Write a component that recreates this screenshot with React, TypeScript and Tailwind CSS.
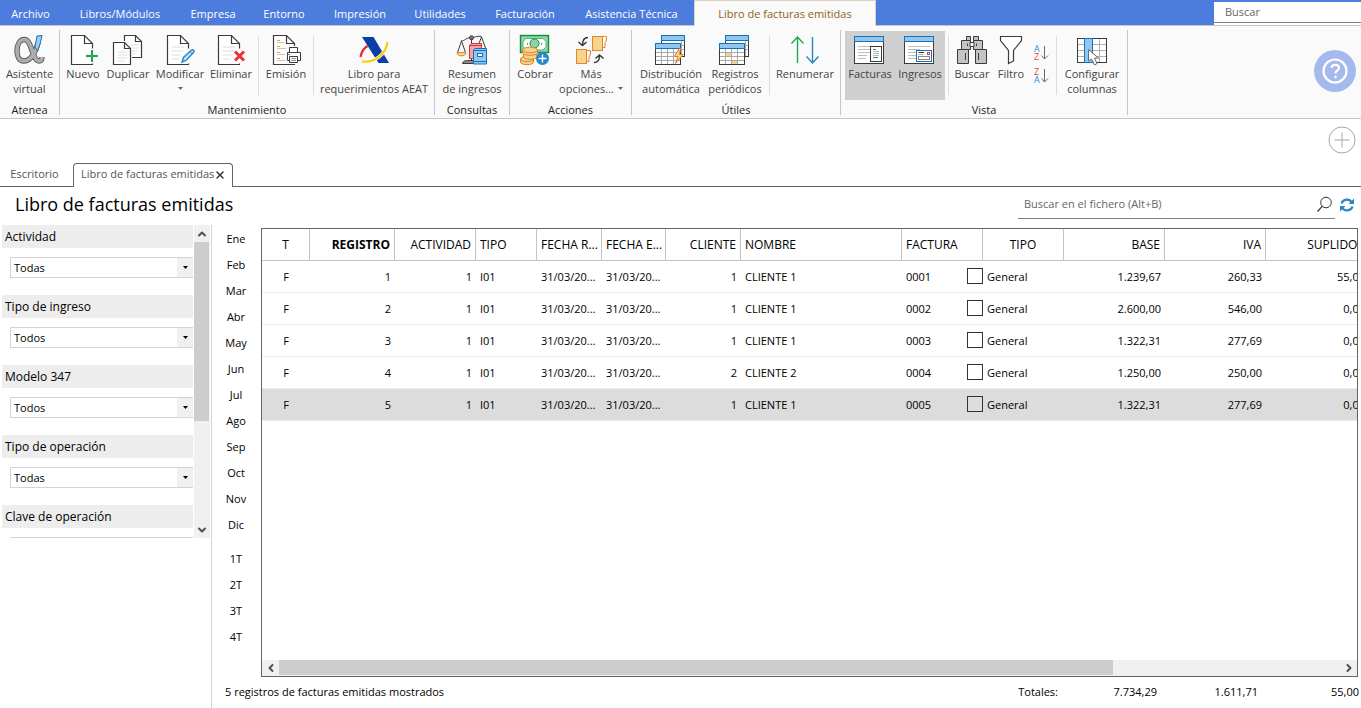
import React from 'react';
import clsx from 'clsx';
import { ChevronDown, ChevronLeft, ChevronRight, ChevronUp, X } from 'lucide-react';

const INK = '#3b3b3b';

const Icon = ({ children }: { children: React.ReactNode }) => (
  <svg width="32" height="32" viewBox="0 0 32 32" fill="none" className="block shrink-0" aria-hidden="true">
    {children}
  </svg>
);

const AlphaIcon = () => {
  const d = 'M24 9 C21 20 16 27 9.500 27 C5 27 3 22 3 17 C3 10 6 5.500 10.500 5.500 C18 5.500 18 27 25 27 C27 27 28 25.500 28 23';
  return (
    <Icon>
      <path d={d} stroke="#5c5c5c" strokeWidth="5.400" />
      <path d={d} stroke="#adadad" strokeWidth="3.600" />
      <path d="M23 2 L28 1.500 L26 10 L23.500 17 L21 13 Z" fill="#9fcdf2" stroke="#1d6fb0" />
    </Icon>
  );
};

const Page = ({ x = 3.5, lines = false }: { x?: number; lines?: boolean }) => (
  <g transform={`translate(${x} 1.5)`}>
    <path d="M0 0 H13 L21 8 V29 H0 Z" fill="#fff" />
    <path d="M21 13 V8 L13 0 H0 V29 H21 V28" stroke={INK} strokeWidth="1.200" />
    <path d="M13 0 V8 H21" stroke={INK} strokeWidth="1.200" />
    {lines && <path d="M4 11.500 H17 M4 15.500 H16 M4 19.500 H13 M4 23.500 H12" stroke="#dcdcdc" />}
  </g>
);

const NewIcon = () => (
  <Icon>
    <Page x={4.5} />
    <path d="M25 16 V28 M19 22 H31" stroke="#fafafa" strokeWidth="4" />
    <path d="M25 16 V28 M19 22 H31" stroke="#1fa750" strokeWidth="2" />
  </Icon>
);

const SmallPage = () => (
  <>
    <path d="M0 0 H11 L17 6 V22 H0 Z" fill="#fff" stroke={INK} strokeWidth="1.200" />
    <path d="M11 0 V6 H17" stroke={INK} strokeWidth="1.200" />
    <path d="M4 9.500 H14 M4 12.500 H14 M4 15.500 H14 M4 18.500 H11" stroke="#dcdcdc" />
  </>
);

const DuplicateIcon = () => (
  <Icon>
    <g transform="translate(12.5 1.5)"><SmallPage /></g>
    <path d="M0 7 H15 L20 12 V32 H0 Z" fill="#fafafa" />
    <g transform="translate(1.5 8.5)"><SmallPage /></g>
  </Icon>
);

const EditIcon = () => (
  <Icon>
    <Page lines />
    <path d="M18 28 L19.500 23.500 L27.500 16 C29 15 31 17 29.500 18.500 L22 26.500 Z" fill="#c4e2f7" stroke="#2586c8" strokeWidth="1.400" />
    <path d="M26 17.500 L28.500 20" stroke="#2586c8" />
  </Icon>
);

const DeleteIcon = () => (
  <Icon>
    <Page lines />
    <path d="M20 17.500 L29 26.500 M29 17.500 L20 26.500" stroke="#fafafa" strokeWidth="5" />
    <path d="M20 17.500 L29 26.500 M29 17.500 L20 26.500" stroke="#ea3434" strokeWidth="3" />
  </Icon>
);

const PrintIcon = () => (
  <Icon>
    <Page />
    <path d="M7 6.500 H10 M7 12.500 H10 M7 18.500 H10 M7 24.500 H10" stroke="#f0a11d" />
    <path d="M7 8.500 H14 M7 14.500 H16 M7 20.500 H15 M7 26.500 H15" stroke="#c4c4c4" />
    <path d="M16 12 H29 V17 H32 V28 H28 V30 H16 Z" fill="#fafafa" />
    <path d="M19.500 18 V13.500 H27.500 V18 M19.500 26.500 H17.500 V18.500 H30.500 V26.500 H27.500 M19.500 22.500 H27.500 V28.500 H19.500 Z" fill="#fff" stroke={INK} />
    <path d="M21.500 24.500 H26 M21.500 26.500 H26" stroke="#8a8a8a" />
    <path d="M17.500 20.500 H20" stroke="#2586c8" />
  </Icon>
);

const AeatIcon = () => (
  <Icon>
    <path d="M9.500 12 C6 14 3.500 18 2.500 23" stroke="#e5262d" strokeWidth="2.200" />
    <path d="M4 3 H15.500 L31 29 H20.500 Z" fill="#0b3ea4" />
    <path d="M4 27.500 C17 29 28 20 29.500 8" stroke="#fafafa" strokeWidth="3.500" />
    <path d="M4 27.500 C17 29 28 20 29.500 8" stroke="#f9cf0a" strokeWidth="2.300" />
  </Icon>
);

const SummaryIcon = () => (
  <Icon>
    <path d="M15.500 5 V26 M5 7 C9 7 10 3.500 15.500 3.500 C20 3.500 21 1.500 25.500 2.500 M5.500 7 L1.500 18.500 M5.500 7 L9.500 18.500 M25.500 3 L22 12 M25.500 3 L29.500 14" stroke={INK} />
    <circle cx="15.500" cy="3.800" r="2" fill="#777" stroke={INK} />
    <path d="M1 18.500 H10 C10 23 1 23 1 18.500 Z" fill="#f8d38b" stroke="#df8428" />
    <path d="M6.500 29.500 C7 26.500 10 26.500 15 26.500 H18 V29.500 Z" fill="#8c8c8c" stroke={INK} />
    <path d="M13.500 11.500 L15 9.500 H25.500 V24.500 H13.500 Z" fill="#f6a5a5" stroke="#dc3030" />
    <path d="M13.500 11.500 H25.500" stroke="#dc3030" />
    <path d="M17.500 16.500 L19 14.500 H30.500 V30 H17.500 Z" fill="#92c8f0" stroke="#1571b8" />
    <path d="M17.500 16.500 H30.500 M17.500 27.500 H30.500" stroke="#1571b8" />
    <rect x="21.500" y="19.500" width="5" height="3" fill="#fff" stroke="#1571b8" />
  </Icon>
);

const CashIcon = () => (
  <Icon>
    <rect x="1.500" y="1.500" width="28" height="17" fill="#8ed4a4" stroke="#138f43" strokeWidth="1.400" />
    <path d="M7 4.500 H24 L27 7.500 V13 L24 16 H7 L4 13 V7.500 Z" fill="#fff" stroke="#57b878" />
    <circle cx="15.500" cy="9.500" r="4.500" fill="#8ed4a4" stroke="#138f43" />
    <path d="M8 10 H9 M22 10 H23" stroke="#138f43" strokeWidth="1.600" />
    <g fill="#f8d38b" stroke="#df8428">
      <path d="M1.500 25 V28 C1.500 31.500 14.500 31.500 14.500 28 V25 Z" />
      <ellipse cx="8" cy="25" rx="6.500" ry="2.600" />
      <path d="M4.500 20.500 V23 C4.500 26 18 26 18 23 V20.500 Z" />
      <path d="M3.500 16 V19 C3.500 22 18.500 22 18.500 19 V16 Z" />
      <ellipse cx="11" cy="16" rx="7.500" ry="2.800" />
    </g>
    <circle cx="23.500" cy="24.500" r="6.500" fill="#2586c8" />
    <path d="M23.500 20.500 V28.500 M19.500 24.500 H27.500" stroke="#fff" strokeWidth="1.400" />
  </Icon>
);

const MoreIcon = () => (
  <Icon>
    <g fill="#f8d38b" stroke="#e0882e">
      <path d="M26.500 2.500 H31.500 V6 L30 9 V13.500 H26.500 Z" fill="#fafafa" />
      <rect x="17.500" y="2.500" width="10" height="14" />
      <path d="M10.500 16.500 H15.500 V20 L14 23 V27.500 H10.500 Z" fill="#fafafa" />
      <rect x="1.500" y="15.500" width="10" height="14" />
    </g>
    <path d="M13 3.500 C9 3.500 7.500 6 7.500 11 M3.500 8 L7.500 11.500 L11.500 8" stroke={INK} strokeWidth="1.500" />
    <path d="M19 28.500 C23 28.500 24.500 26 24.500 22 M20.500 24.500 L24.500 21 L28.500 24.500" stroke={INK} strokeWidth="1.500" />
  </Icon>
);

const TablePair = ({ children }: { children: React.ReactNode }) => (
  <Icon>
    <rect x="6.500" y="1.500" width="23" height="21" fill="#fff" stroke={INK} />
    <path d="M25 11.500 H29 M25 15.500 H29 M26.500 7 V22" stroke="#a8a8a8" />
    <rect x="6.500" y="1.500" width="23" height="5" fill="#92c8f0" stroke="#1571b8" />
    <rect x="0.500" y="9.500" width="25" height="21" fill="#fff" stroke={INK} />
    <path d="M1 18.500 H25 M1 22.500 H25 M1 26.500 H25 M6.500 15 V30 M12.500 15 V30 M18.500 15 V30" stroke="#a8a8a8" />
    <rect x="0.500" y="9.500" width="25" height="5" fill="#92c8f0" stroke="#1571b8" />
    {children}
  </Icon>
);

const DistributionIcon = () => (
  <TablePair>
    <path d="M24 14.500 L19.500 22.500 H23 L20.500 29.500 L28 20.500 H24.500 L25.500 14.500 Z" fill="#f8d38b" stroke="#e8772e" />
  </TablePair>
);

const PeriodicIcon = () => (
  <TablePair>
    <path d="M7 19 H12 V22 H7 Z M13 27 H18 V30 H13 Z" fill="#f8d38b" />
  </TablePair>
);

const RenumberIcon = () => (
  <Icon>
    <path d="M8.500 29 V3 M2.500 9.500 L8.500 3 L14.500 9.500" stroke="#1fa750" strokeWidth="1.400" />
    <path d="M23.500 3 V29 M17.500 22.500 L23.500 29 L29.500 22.500" stroke="#2586c8" strokeWidth="1.400" />
  </Icon>
);

const WindowFrame = ({ children }: { children: React.ReactNode }) => (
  <Icon>
    <rect x="0.500" y="2.500" width="29" height="27" fill="#fff" stroke={INK} />
    <rect x="0.500" y="2.500" width="29" height="5" fill="#92c8f0" stroke="#1571b8" />
    <path d="M4 12.500 H26 M4 15.500 H16 M4 18.500 H16 M4 21.500 H13 M4 24.500 H12" stroke="#bdbdbd" />
    {children}
  </Icon>
);

const InvoicesIcon = () => (
  <WindowFrame>
    <rect x="16.500" y="12.500" width="11" height="15" fill="#fff" stroke={INK} />
    <path d="M19 15.500 H22 M19 23.500 H24" stroke="#1fa750" />
    <path d="M19 17.500 H25 M19 19.500 H25 M19 21.500 H25" stroke="#bdbdbd" />
  </WindowFrame>
);

const IncomeIcon = () => (
  <WindowFrame>
    <rect x="12.500" y="16.500" width="15" height="11" fill="#fff" stroke="#1571b8" />
    <path d="M14.500 18.500 H20" stroke={INK} />
    <path d="M14.500 20.500 H19" stroke="#a8a8a8" />
    <rect x="14.500" y="22.500" width="11" height="3" stroke="#8a8a8a" />
    <rect x="23.500" y="18.500" width="2" height="2" stroke="#ea3434" />
  </WindowFrame>
);

const BinocularsIcon = () => (
  <Icon>
    <g fill="#c4c4c4" stroke={INK}>
      <path d="M10.500 2.500 H14.500 V6.500 H10.500 Z M17.500 2.500 H22.500 V6.500 H17.500 Z" />
      <path d="M5.500 6.500 H14.500 V15.500 H5.500 Z M17.500 6.500 H26.500 V15.500 H17.500 Z" />
      <path d="M1.500 15.500 H12.500 V29.500 H1.500 Z M19.500 15.500 H30.500 V29.500 H19.500 Z" />
      <path d="M14 8.500 H18 V12.500 H14 Z" fill="#fff" />
    </g>
    <path d="M9.500 19 V26 M22.500 19 V26 M11.500 9.500 V12 M20.500 9.500 V12" stroke={INK} />
  </Icon>
);

const FunnelIcon = () => (
  <Icon>
    <path d="M5.500 2.500 H26.500 V6.500 L18.500 16.500 V27 L13.500 29.500 V16.500 L5.500 6.500 Z" fill="#fff" stroke={INK} strokeWidth="1.200" />
  </Icon>
);

const SortIcon = ({ from, to, fromColor, toColor }: { from: string; to: string; fromColor: string; toColor: string }) => (
  <svg width="16" height="16" viewBox="0 0 16 16" className="block overflow-visible" aria-hidden="true">
    <text x="0" y="7" fontSize="9" fontFamily="Open Sans" fill={fromColor}>{from}</text>
    <text x="0" y="15" fontSize="9" fontFamily="Open Sans" fill={toColor}>{to}</text>
    <path d="M10.500 1 V14 M7.500 10.500 L10.500 14 L14 10.500" fill="none" stroke="#6a6a6a" />
  </svg>
);

const ColumnsIcon = () => (
  <Icon>
    <rect x="1.500" y="4.500" width="29" height="24" fill="#fff" />
    <path d="M2 10.500 H30 M2 16.500 H30 M2 22.500 H30 M23.500 5 V28" stroke="#b0b0b0" />
    <rect x="1.500" y="4.500" width="29" height="24" stroke={INK} />
    <rect x="8.500" y="4.500" width="8" height="24" fill="#92c8f0" stroke="#1571b8" />
    <path d="M12.500 15.500 V27 L15.500 25 L18.500 31 L21 29.500 L18.500 24 H22.500 Z" fill="#fff" stroke="#6a6a6a" />
  </Icon>
);

const menuItems = [
  { label: 'Archivo', width: 'w-[61px]' },
  { label: 'Libros/Módulos', width: 'w-[118px]' },
  { label: 'Empresa', width: 'w-[68px]' },
  { label: 'Entorno', width: 'w-[74px]' },
  { label: 'Impresión', width: 'w-[78px]' },
  { label: 'Utilidades', width: 'w-[82px]' },
  { label: 'Facturación', width: 'w-[88px]' },
  { label: 'Asistencia Técnica', width: 'w-[125px]' },
];

const months = ['Ene', 'Feb', 'Mar', 'Abr', 'May', 'Jun', 'Jul', 'Ago', 'Sep', 'Oct', 'Nov', 'Dic'];
const quarters = ['1T', '2T', '3T', '4T'];

const filters = [
  { id: 'actividad', label: 'Actividad', value: 'Todas' },
  { id: 'tipo-ingreso', label: 'Tipo de ingreso', value: 'Todos' },
  { id: 'modelo-347', label: 'Modelo 347', value: 'Todos' },
  { id: 'tipo-operacion', label: 'Tipo de operación', value: 'Todas' },
  { id: 'clave-operacion', label: 'Clave de operación', value: '' },
];

const invoices = [
  { registro: 1, cliente: 1, nombre: 'CLIENTE 1', factura: '0001', base: '1.239,67', iva: '260,33', suplidos: '55,00' },
  { registro: 2, cliente: 1, nombre: 'CLIENTE 1', factura: '0002', base: '2.600,00', iva: '546,00', suplidos: '0,00' },
  { registro: 3, cliente: 1, nombre: 'CLIENTE 1', factura: '0003', base: '1.322,31', iva: '277,69', suplidos: '0,00' },
  { registro: 4, cliente: 2, nombre: 'CLIENTE 2', factura: '0004', base: '1.250,00', iva: '250,00', suplidos: '0,00' },
  { registro: 5, cliente: 1, nombre: 'CLIENTE 1', factura: '0005', base: '1.322,31', iva: '277,69', suplidos: '0,00' },
];

interface ToolProps {
  icon: React.ReactNode;
  lines: string[];
  width: string;
  caret?: 'below' | 'inline';
  active?: boolean;
}

const Caret = () => (
  <svg width="5" height="3" viewBox="0 0 5 3" aria-hidden="true">
    <path d="M0 0 H5 L2.500 3 Z" fill="#6a6a6a" />
  </svg>
);

const Tool = ({ icon, lines, width, caret, active }: ToolProps) => (
  <button
    type="button"
    className={clsx('flex h-[69px] shrink-0 flex-col items-center pt-[3px] leading-[15px] whitespace-nowrap text-[#444]', width, active && 'bg-[#cfcfcf]')}
  >
    {icon}
    {lines.map((line, i) => (
      <span key={line} className="flex items-center gap-1">
        {line}
        {caret === 'inline' && i === lines.length - 1 && <Caret />}
      </span>
    ))}
    {caret === 'below' && <span className="flex h-[15px] items-center"><Caret /></span>}
  </button>
);

const Group = ({ title, children }: { title: string; children: React.ReactNode }) => (
  <section className="flex h-[85px] shrink-0 flex-col border-r border-[#c6c6c6] pt-px">
    <div className="flex">{children}</div>
    <h2 className="mt-[3px] text-center leading-[14px] text-[#222]">{title}</h2>
  </section>
);

const Divider = () => <div className="mt-[5px] h-[59px] w-px shrink-0 bg-[#dcdcdc]" />;

const Ribbon = () => (
  <div className="flex h-[93px] shrink-0 overflow-hidden border-b border-[#c6c6c6] bg-[#fafafa] pt-1">
    <Group title="Atenea">
      <Tool icon={<AlphaIcon />} lines={['Asistente', 'virtual']} width="w-[59px]" />
    </Group>
    <Group title="Mantenimiento">
      <Tool icon={<NewIcon />} lines={['Nuevo']} width="w-[46px]" />
      <Tool icon={<DuplicateIcon />} lines={['Duplicar']} width="w-[44px]" />
      <Tool icon={<EditIcon />} lines={['Modificar']} width="w-[60px]" caret="below" />
      <Tool icon={<DeleteIcon />} lines={['Eliminar']} width="w-[42px]" />
      <div className="w-1.5" />
      <Divider />
      <Tool icon={<PrintIcon />} lines={['Emisión']} width="w-[54px]" />
      <Divider />
      <Tool icon={<AeatIcon />} lines={['Libro para', 'requerimientos AEAT']} width="w-[120px]" />
    </Group>
    <Group title="Consultas">
      <Tool icon={<SummaryIcon />} lines={['Resumen', 'de ingresos']} width="w-[74px]" />
    </Group>
    <Group title="Acciones">
      <Tool icon={<CashIcon />} lines={['Cobrar']} width="w-[50px]" />
      <Tool icon={<MoreIcon />} lines={['Más', 'opciones...']} width="w-[62px]" caret="inline" />
      <div className="w-[9px]" />
    </Group>
    <Group title="Útiles">
      <Tool icon={<DistributionIcon />} lines={['Distribución', 'automática']} width="w-[78px]" />
      <Tool icon={<PeriodicIcon />} lines={['Registros', 'periódicos']} width="w-[50px]" />
      <div className="w-[9px]" />
      <Divider />
      <Tool icon={<RenumberIcon />} lines={['Renumerar']} width="w-[70px]" />
    </Group>
    <Group title="Vista">
      <div className="w-1" />
      <Tool icon={<InvoicesIcon />} lines={['Facturas']} width="w-[50px]" active />
      <Tool icon={<IncomeIcon />} lines={['Ingresos']} width="w-[50px]" active />
      <div className="w-[3px]" />
      <Divider />
      <Tool icon={<BinocularsIcon />} lines={['Buscar']} width="w-[46px]" />
      <Tool icon={<FunnelIcon />} lines={['Filtro']} width="w-[32px]" />
      <div className="flex w-[29px] flex-col items-center gap-[7px] pt-[14px]">
        <button type="button" aria-label="Orden ascendente">
          <SortIcon from="A" to="Z" fromColor="#2f8fd6" toColor="#e8434a" />
        </button>
        <button type="button" aria-label="Orden descendente">
          <SortIcon from="Z" to="A" fromColor="#e8434a" toColor="#2f8fd6" />
        </button>
      </div>
      <Divider />
      <Tool icon={<ColumnsIcon />} lines={['Configurar', 'columnas']} width="w-[70px]" />
    </Group>
    <button type="button" aria-label="Ayuda" className="mt-5 mr-[5px] ml-auto h-[42px] w-[42px] shrink-0 rounded-full bg-[#a5baec]">
      <svg width="42" height="42" viewBox="0 0 42 42" fill="none" stroke="#fff" aria-hidden="true">
        <circle cx="21" cy="21" r="11.500" strokeWidth="2.200" />
        <path d="M17.500 18 C17.500 13.500 25 14 25 18 C25 20.500 21.500 20.500 21.500 23.500" strokeWidth="2.200" />
        <circle cx="21.500" cy="27" r="1.300" fill="#fff" stroke="none" />
      </svg>
    </button>
  </div>
);

const Sidebar = () => (
  <aside className="w-[212px] shrink-0 border-r border-[#d4d4d4]">
    <div className="flex h-[313px] overflow-hidden pr-px">
      <div className="flex-1 pr-px pl-0.5">
        {filters.map((filter) => (
          <div key={filter.id} className="h-[70px]">
            <label htmlFor={filter.id} className="block h-[23px] bg-[#ededed] pl-[3px] text-[12px] leading-[23px]">
              {filter.label}
            </label>
            <div className="relative mt-[9px] ml-2">
              <select
                id={filter.id}
                defaultValue={filter.value}
                className="block h-[21px] w-full appearance-none border border-r-0 border-[#d4d4d4] bg-white pl-[3px] leading-[19px]"
              >
                <option>{filter.value}</option>
              </select>
              <span className="pointer-events-none absolute top-px right-0 flex h-[19px] w-4 items-center justify-center bg-[#f0f0f0]">
                <svg width="5" height="3" viewBox="0 0 5 3" aria-hidden="true">
                  <path d="M0 0 H5 L2.500 3 Z" fill="#000" />
                </svg>
              </span>
            </div>
          </div>
        ))}
      </div>
      <div className="flex w-4 flex-col bg-[#f0f0f0] text-[#505050]">
        <button type="button" aria-label="Subir" className="flex h-[17px] items-center justify-center">
          <ChevronUp size={12} strokeWidth={4} />
        </button>
        <div className="h-[179px] w-[15px] bg-[#cdcdcd]" />
        <button type="button" aria-label="Bajar" className="mt-auto flex h-[17px] items-center justify-center">
          <ChevronDown size={12} strokeWidth={4} />
        </button>
      </div>
    </div>
  </aside>
);

const PeriodButton = ({ label }: { label: string }) => (
  <button type="button" className="block h-[26px] w-full text-center leading-[26px]">{label}</button>
);

const headCell = 'border-r border-b border-[#c4c4c4] pl-1 whitespace-nowrap';
const bodyCell = 'border-b border-[#ececec] pt-0.5 pl-1 whitespace-nowrap';

const InvoiceTable = () => (
  <table className="w-[1105px] table-fixed border-separate border-spacing-0">
    <colgroup>
      <col className="w-[48px]" />
      <col className="w-[85px]" />
      <col className="w-[81px]" />
      <col className="w-[61px]" />
      <col className="w-[65px]" />
      <col className="w-[64px]" />
      <col className="w-[75px]" />
      <col className="w-[161px]" />
      <col className="w-[65px]" />
      <col className="w-[16px]" />
      <col className="w-[81px]" />
      <col className="w-[101px]" />
      <col className="w-[101px]" />
      <col className="w-[101px]" />
    </colgroup>
    <thead className="text-[12px]">
      <tr className="h-8">
        <th className={clsx(headCell, 'pr-1 font-normal')}>T</th>
        <th className={clsx(headCell, 'pr-1 text-right font-bold')}>REGISTRO</th>
        <th className={clsx(headCell, 'pr-1 text-right font-normal')}>ACTIVIDAD</th>
        <th className={clsx(headCell, 'text-left font-normal')}>TIPO</th>
        <th className={clsx(headCell, 'text-left font-normal')}>FECHA R...</th>
        <th className={clsx(headCell, 'text-left font-normal')}>FECHA E...</th>
        <th className={clsx(headCell, 'pr-1 text-right font-normal')}>CLIENTE</th>
        <th className={clsx(headCell, 'text-left font-normal')}>NOMBRE</th>
        <th colSpan={2} className={clsx(headCell, 'text-left font-normal')}>FACTURA</th>
        <th className={clsx(headCell, 'pr-1 font-normal')}>TIPO</th>
        <th className={clsx(headCell, 'pr-1 text-right font-normal')}>BASE</th>
        <th className={clsx(headCell, 'pr-1 text-right font-normal')}>IVA</th>
        <th className={clsx(headCell, 'pr-0.5 text-right font-normal')}>SUPLIDOS</th>
      </tr>
    </thead>
    <tbody>
      {invoices.map((invoice) => (
        <tr key={invoice.registro} className={clsx('h-8', invoice.registro === 5 && 'bg-[#dcdcdc]')}>
          <td className={clsx(bodyCell, 'pr-1 text-center')}>F</td>
          <td className={clsx(bodyCell, 'pr-1 text-right')}>{invoice.registro}</td>
          <td className={clsx(bodyCell, 'pr-1 text-right')}>1</td>
          <td className={bodyCell}>I01</td>
          <td className={bodyCell}>31/03/20...</td>
          <td className={bodyCell}>31/03/20...</td>
          <td className={clsx(bodyCell, 'pr-1 text-right')}>{invoice.cliente}</td>
          <td className={bodyCell}>{invoice.nombre}</td>
          <td className={bodyCell}>{invoice.factura}</td>
          <td className="border-b border-[#ececec] p-0 pb-px">
            <input
              type="checkbox"
              aria-label={`Marcar factura ${invoice.factura}`}
              className="block h-4 w-4 appearance-none border border-[#333]"
            />
          </td>
          <td className={bodyCell}>General</td>
          <td className={clsx(bodyCell, 'pr-1 text-right')}>{invoice.base}</td>
          <td className={clsx(bodyCell, 'pr-1 text-right')}>{invoice.iva}</td>
          <td className={clsx(bodyCell, 'pr-0.5 text-right')}>{invoice.suplidos}</td>
        </tr>
      ))}
    </tbody>
  </table>
);

const App = () => (
  <div className="flex h-screen flex-col overflow-hidden bg-white font-['Open_Sans','Noto_Sans',sans-serif] text-[11px] text-black">
    {/* Menu bar */}
    <header className="flex h-[26px] shrink-0 border-b border-[#c6c6c6] bg-[#4d7ddc] text-white">
      <nav className="flex">
        {menuItems.map((item) => (
          <button key={item.label} type="button" className={clsx('h-[26px] shrink-0 pt-0.5 text-center whitespace-nowrap', item.width)}>
            {item.label}
          </button>
        ))}
        <button type="button" className="h-[26px] w-[182px] shrink-0 border-x border-t border-[#d8d4c0] bg-[#fafafa] pt-px text-[#8a6414]">
          Libro de facturas emitidas
        </button>
      </nav>
      <div className="mt-0.5 ml-auto h-[23px] w-[147px] bg-white">
        <input
          type="search"
          placeholder="Buscar"
          aria-label="Buscar"
          className="block h-[21px] w-full border-b border-[#808080] px-[11px] pb-0.5 text-[#666] placeholder:text-[#666]"
        />
      </div>
    </header>

    <Ribbon />

    <div className="flex shrink-0 justify-end pt-[7px] pr-[5px]">
      <button type="button" aria-label="Añadir">
        <svg width="28" height="28" viewBox="0 0 28 28" fill="none" stroke="#a8a8a8" aria-hidden="true">
          <circle cx="14" cy="14" r="13" />
          <path d="M14 6.500 V21.500 M6.500 14 H21.500" />
        </svg>
      </button>
    </div>

    {/* Document tabs */}
    <div className="mt-[9px] flex h-6 shrink-0 text-[#555]">
      <button type="button" className="w-[73px] border-b border-[#646464] pr-1">Escritorio</button>
      <div className="flex w-[160px] items-center justify-between rounded-t-[4px] border border-b-0 border-[#646464] px-[7px] pb-0.5">
        <button type="button" className="whitespace-nowrap">Libro de facturas emitidas</button>
        <button type="button" aria-label="Cerrar pestaña" className="text-[#333]">
          <X size={12} strokeWidth={3} />
        </button>
      </div>
      <div className="flex-1 border-b border-[#646464]" />
    </div>

    <div className="flex h-[38px] shrink-0 items-start justify-between pl-[15px]">
      <h1 className="text-[18px] leading-[35px]">Libro de facturas emitidas</h1>
      <div className="mt-1 flex items-center pr-1.5">
        <div className="flex h-7 w-[317px] items-center border-b border-[#808080] pr-0.5">
          <input
            type="search"
            placeholder="Buscar en el fichero (Alt+B)"
            aria-label="Buscar en el fichero"
            className="min-w-0 flex-1 px-1.5 placeholder:text-[#666]"
          />
          <svg width="17" height="17" viewBox="0 0 17 17" fill="none" stroke="#333" aria-hidden="true">
            <circle cx="10" cy="6.500" r="5.300" />
            <path d="M6.200 10.300 L1.500 15.500" strokeWidth="1.200" />
          </svg>
        </div>
        <button type="button" aria-label="Actualizar" className="ml-1">
          <svg width="16" height="16" viewBox="0 0 16 16" fill="none" aria-hidden="true">
            <path d="M2.500 6.500 C4 1.500 10.500 1.500 12.500 5 M13.500 9.500 C12 14.500 5.500 14.500 3.500 11" stroke="#2586c8" strokeWidth="2.200" />
            <path d="M15 1.500 V7 H9.500 Z M1 14.500 V9 H6.500 Z" fill="#2586c8" />
          </svg>
        </button>
      </div>
    </div>

    <div className="flex min-h-0 flex-1">
      <Sidebar />
      <nav className="w-[49px] shrink-0 pt-px pr-px">
        {months.map((month) => <PeriodButton key={month} label={month} />)}
        <div className="h-2" />
        {quarters.map((quarter) => <PeriodButton key={quarter} label={quarter} />)}
      </nav>
      <main className="-ml-9 flex min-w-0 flex-1 flex-col pt-[3px]">
        <div className="mr-[3px] ml-9 flex min-h-0 flex-1 flex-col border border-[#646464]">
          <div className="min-h-0 flex-1 overflow-hidden">
            <InvoiceTable />
          </div>
          <div className="flex h-4 shrink-0 bg-[#f0f0f0] text-[#505050]">
            <button type="button" aria-label="Desplazar a la izquierda" className="flex w-[17px] items-center justify-center">
              <ChevronLeft size={12} strokeWidth={4} />
            </button>
            <div className="h-[15px] flex-[835] bg-[#cdcdcd]" />
            <div className="flex-[227]" />
            <button type="button" aria-label="Desplazar a la derecha" className="flex w-[17px] items-center justify-center">
              <ChevronRight size={12} strokeWidth={4} />
            </button>
          </div>
        </div>
        <footer className="flex h-[31px] shrink-0 items-center justify-between pr-0.5">
          <p>5 registros de facturas emitidas mostrados</p>
          <div className="flex text-right">
            <span>Totales:</span>
            <span className="w-[99px]">7.734,29</span>
            <span className="w-[101px]">1.611,71</span>
            <span className="w-[101px]">55,00</span>
          </div>
        </footer>
      </main>
    </div>
  </div>
);

export default App;
